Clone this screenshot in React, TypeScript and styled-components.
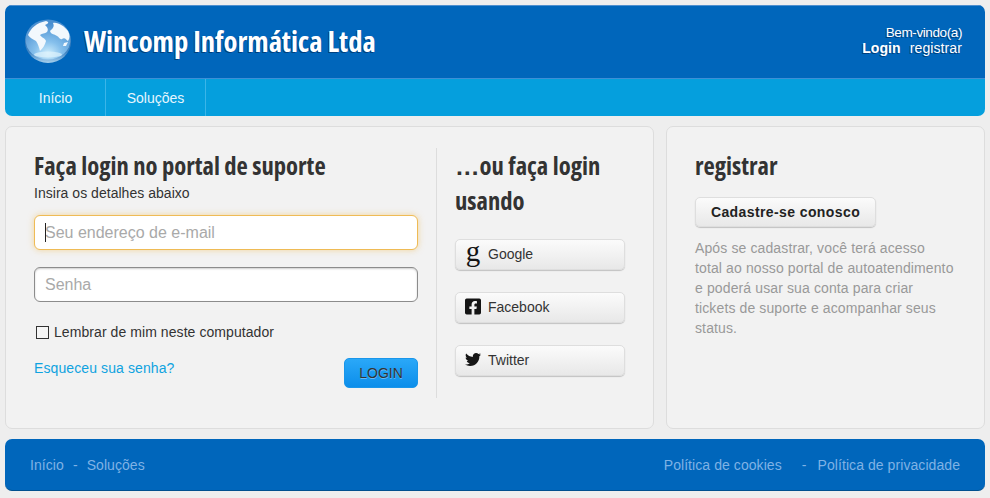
import styled, { createGlobalStyle } from 'styled-components';
import { FaFacebookSquare, FaTwitter } from 'react-icons/fa';

const BLUE = '#0066bb';
const CYAN = '#059fdd';
const SANS = '"Liberation Sans", Arial, sans-serif';
const HEADING = '"Open Sans", "Noto Sans", sans-serif';

const GlobalStyle = createGlobalStyle`
  html, body { margin: 0; padding: 0; }
  body {
    background: #eeeeee;
    color: #333;
    font-family: ${SANS};
    font-size: 14px;
  }
  * { box-sizing: border-box; }
`;

const Page = styled.div`
  width: 990px;
  height: 498px;
  padding: 5px;
  display: flex;
  flex-direction: column;
  overflow: hidden;
`;

const Header = styled.header`
  height: 111px;
  border-radius: 7px;
  overflow: hidden;
  display: flex;
  flex-direction: column;
`;

const TopBar = styled.div`
  height: 74px;
  background: ${BLUE};
  border-top: 1px solid #4f8fce;
  border-bottom: 1px solid #3d8fd6;
  display: flex;
  align-items: flex-start;
  justify-content: space-between;
  padding: 0 23px 0 19px;
`;

const Brand = styled.div`
  display: flex;
  align-items: center;
  gap: 12px;
  height: 100%;
  padding-bottom: 3px;
`;

const Title = styled.h1`
  margin: 0;
  font-family: ${HEADING};
  font-stretch: 75%;
  font-weight: 700;
  font-size: 28.5px;
  line-height: 32px;
  color: #fff;
  text-shadow: -1px 1px 0 #003f7d;
  white-space: nowrap;
`;

const Welcome = styled.div`
  padding-top: 19px;
  text-align: right;
  font-size: 13.5px;
  line-height: 16px;
  letter-spacing: -0.4px;
  color: #fff;
  text-shadow: -1px 1px 0 #003f7d;
`;

const UserLinks = styled.div`
  margin-top: -1px;
  display: flex;
  justify-content: flex-end;
  gap: 9px;
  font-size: 14px;
  letter-spacing: 0.1px;
`;

const UserLink = styled.a<{ $strong?: boolean }>`
  font-weight: ${(p) => (p.$strong ? 700 : 400)};
  color: #fff;
`;

const Nav = styled.nav`
  flex: 1;
  background: ${CYAN};
  display: flex;
  padding-left: 1px;
`;

const NavItem = styled.a`
  width: 100px;
  display: flex;
  align-items: center;
  justify-content: center;
  color: #e6f6fd;
  font-size: 14px;
  border-right: 1px solid #3bb5e8;
`;

const Main = styled.main`
  margin-top: 10px;
  height: 303px;
  display: flex;
  gap: 12px;
`;

const Panel = styled.section<{ $width: number }>`
  width: ${(p) => p.$width}px;
  flex: none;
  background: #f2f2f2;
  border: 1px solid #dddddd;
  border-radius: 7px;
`;

const LoginPanel = styled(Panel)`
  display: flex;
  padding: 21px 0 30px 28px;
`;

const FormColumn = styled.div`
  width: 384px;
  flex: none;
`;

const SocialColumn = styled.div`
  margin-left: 18px;
  padding-left: 18px;
  width: 190px;
  flex: none;
  border-left: 1px solid #dddddd;
`;

const Heading = styled.h2`
  margin: 0;
  font-family: ${HEADING};
  font-stretch: 75%;
  font-weight: 700;
  font-size: 24.6px;
  line-height: 35px;
  color: #333;
`;

const Dots = styled.span`
  font-family: ${SANS};
  font-stretch: normal;
  line-height: 1;
`;

const Subtitle = styled.p`
  margin: 1px 0 13px;
  font-size: 14px;
  line-height: 18px;
  letter-spacing: 0.03px;
  color: #333;
`;

const FieldWrap = styled.div`
  position: relative;
  margin-bottom: 17px;
`;

const Caret = styled.span`
  position: absolute;
  left: 11px;
  top: 8px;
  width: 1px;
  height: 19px;
  background: #222;
`;

const Field = styled.input<{ $focused?: boolean }>`
  display: block;
  width: 100%;
  height: 35px;
  padding: 0 10px;
  background: #fff;
  border-radius: 6px;
  border: 1px solid ${(p) => (p.$focused ? '#efbb55' : '#8c8c8c')};
  box-shadow: ${(p) =>
    p.$focused ? '0 0 6px rgba(240, 185, 80, 0.55)' : 'inset 0 1px 2px rgba(0, 0, 0, 0.2)'};
  font-family: ${SANS};
  font-size: 16px;
  color: #333;
  outline: none;
  &::placeholder { color: #a9a9a9; opacity: 1; }
`;

const Remember = styled.label`
  display: flex;
  align-items: center;
  gap: 5px;
  margin: 21px 0 0 2px;
  font-size: 14px;
  line-height: 18px;
  letter-spacing: 0.07px;
  color: #333;
`;

const Check = styled.input`
  appearance: none;
  width: 13px;
  height: 13px;
  margin: 0;
  background: #f6f6f6;
  border: 1px solid #333;
`;

const FormFooter = styled.div`
  margin-top: 17px;
  display: flex;
  justify-content: space-between;
  align-items: flex-start;
`;

const Forgot = styled.a`
  margin-top: 1px;
  color: #0fa3e0;
  font-size: 14px;
  line-height: 18px;
  letter-spacing: 0.1px;
`;

const LoginButton = styled.button`
  width: 74px;
  height: 30px;
  padding: 0;
  border: 1px solid #1a96ea;
  border-radius: 5px;
  background: linear-gradient(#2aa8f8, #0c8eea);
  color: #333;
  font-family: ${SANS};
  font-size: 14px;
  text-shadow: 0 1px 0 rgba(255, 255, 255, 0.35);
`;

const SocialList = styled.div`
  margin-top: 21px;
  display: flex;
  flex-direction: column;
  gap: 22px;
`;

const SocialButton = styled.a`
  width: 170px;
  height: 31px;
  display: flex;
  align-items: center;
  gap: 7px;
  padding: 0 0 2px 9px;
  border: 1px solid #dedede;
  border-radius: 5px;
  background: linear-gradient(#fbfbfb, #e8e8e8);
  box-shadow: 0 1px 1px rgba(0, 0, 0, 0.2);
  color: #333;
  font-size: 14px;
`;

const IconSlot = styled.span`
  width: 16px;
  height: 18px;
  display: flex;
  align-items: center;
  justify-content: center;
  color: #151515;
  font-size: 19px;
`;

const SerifG = styled.span`
  font-family: "Liberation Serif", serif;
  font-size: 29px;
  line-height: 18px;
  position: relative;
  top: -3px;
`;

const RegisterPanel = styled(Panel)`
  padding: 21px 28px 0;
`;

const RegisterButton = styled.a`
  margin-top: 14px;
  width: 181px;
  height: 30px;
  display: flex;
  align-items: center;
  justify-content: center;
  border: 1px solid #dedede;
  border-radius: 5px;
  background: linear-gradient(#fbfbfb, #e8e8e8);
  box-shadow: 0 1px 1px rgba(0, 0, 0, 0.2);
  color: #222;
  font-weight: 700;
  font-size: 14px;
  letter-spacing: 0.4px;
`;

const Blurb = styled.p`
  margin: 11px 0 0;
  width: 260px;
  font-size: 14px;
  line-height: 20px;
  letter-spacing: 0.12px;
  color: #999;
`;

const Footer = styled.footer`
  margin-top: 10px;
  height: 52px;
  border-radius: 7px;
  background: ${BLUE};
  border-bottom: 1px solid #00508f;
  display: flex;
  align-items: center;
  justify-content: space-between;
  padding: 0 25px;
  color: #7fb2e5;
  font-size: 14px;
  letter-spacing: 0.07px;
`;

const FooterLinks = styled.div<{ $gap: number }>`
  display: flex;
  gap: ${(p) => p.$gap}px;
`;

const WideDash = styled.span`
  margin-left: 9px;
`;

const Globe = () => (
  <svg width="48" height="46" viewBox="0 0 48 46">
    <defs>
      <radialGradient id="sphere" cx="50%" cy="85%" r="75%">
        <stop offset="0" stopColor="#cfeefc" />
        <stop offset="0.4" stopColor="#86c0ec" />
        <stop offset="1" stopColor="#4a8fd0" />
      </radialGradient>
      <linearGradient id="rim" x1="0" y1="0" x2="0" y2="1">
        <stop offset="0" stopColor="#2f6fae" />
        <stop offset="0.75" stopColor="#3f83c2" />
        <stop offset="1" stopColor="#a9d2ee" />
      </linearGradient>
      <filter id="soft">
        <feGaussianBlur stdDeviation="0.35" />
      </filter>
    </defs>
    <ellipse cx="24" cy="23.5" rx="23" ry="21.5" fill="url(#rim)" />
    <ellipse cx="24" cy="21.5" rx="22.5" ry="20" fill="url(#sphere)" />
    <g filter="url(#soft)" fill="#f2f8fd">
      <path d="M4 17 C7 10 12 5 22 3 C26 4 24 6 21 7 C23 9 25 11 23 14 C21 16 18 15 16 17 C18 20 21 20 22 23 C21 27 19 30 16 33 C15 29 14 26 12 23 C9 21 6 20 4 17 Z" />
      <path d="M29 5 C34 4 40 8 44 13 C46 17 46 20 44 23 C42 22 41 19 38 21 C36 22 35 19 33 18 C31 16 27 17 26 13 C28 11 31 9 29 5 Z" />
      <path d="M40 25 L44 24 L42 28 L39 28 Z" />
    </g>
    <ellipse cx="24" cy="36.5" rx="14" ry="3" fill="#e0f4fd" opacity="0.7" filter="url(#soft)" />
  </svg>
);

export default function App() {
  return (
    <Page>
      <GlobalStyle />
      <Header>
        <TopBar>
          <Brand>
            <Globe />
            <Title>Wincomp Informática Ltda</Title>
          </Brand>
          <Welcome>
            Bem-vindo(a)
            <UserLinks>
              <UserLink $strong>Login</UserLink>
              <UserLink>registrar</UserLink>
            </UserLinks>
          </Welcome>
        </TopBar>
        <Nav>
          <NavItem>Início</NavItem>
          <NavItem>Soluções</NavItem>
        </Nav>
      </Header>

      <Main>
        <LoginPanel $width={649}>
          <FormColumn>
            <Heading>Faça login no portal de suporte</Heading>
            <Subtitle>Insira os detalhes abaixo</Subtitle>
            <FieldWrap>
              <Field $focused placeholder="Seu endereço de e-mail" />
              <Caret />
            </FieldWrap>
            <FieldWrap>
              <Field type="password" placeholder="Senha" />
            </FieldWrap>
            <Remember>
              <Check type="checkbox" />
              Lembrar de mim neste computador
            </Remember>
            <FormFooter>
              <Forgot>Esqueceu sua senha?</Forgot>
              <LoginButton>LOGIN</LoginButton>
            </FormFooter>
          </FormColumn>
          <SocialColumn>
            <Heading><Dots>…</Dots>ou faça login usando</Heading>
            <SocialList>
              <SocialButton>
                <IconSlot><SerifG aria-hidden>g</SerifG></IconSlot>
                Google
              </SocialButton>
              <SocialButton>
                <IconSlot><FaFacebookSquare /></IconSlot>
                Facebook
              </SocialButton>
              <SocialButton>
                <IconSlot><FaTwitter /></IconSlot>
                Twitter
              </SocialButton>
            </SocialList>
          </SocialColumn>
        </LoginPanel>
        <RegisterPanel $width={319}>
          <Heading>registrar</Heading>
          <RegisterButton>Cadastre-se conosco</RegisterButton>
          <Blurb>
            Após se cadastrar, você terá acesso total ao nosso portal de autoatendimento e poderá
            usar sua conta para criar tickets de suporte e acompanhar seus status.
          </Blurb>
        </RegisterPanel>
      </Main>

      <Footer>
        <FooterLinks $gap={9}>
          <span>Início</span>
          <span>-</span>
          <span>Soluções</span>
        </FooterLinks>
        <FooterLinks $gap={11}>
          <span>Política de cookies</span>
          <WideDash>-</WideDash>
          <span>Política de privacidade</span>
        </FooterLinks>
      </Footer>
    </Page>
  );
}
